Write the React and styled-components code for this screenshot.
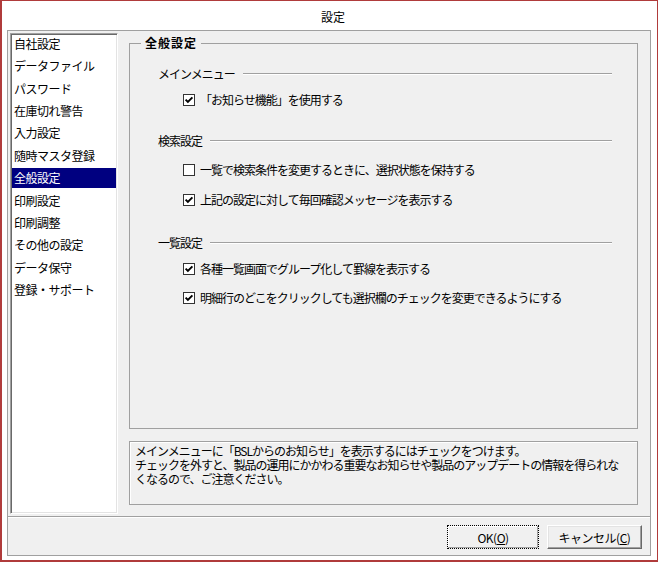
import React from 'react';
import styled, { createGlobalStyle } from 'styled-components';

const Global = createGlobalStyle`
  html, body { margin: 0; padding: 0; background: #fff; }
  body { font-family: "Noto Sans CJK JP", "Noto Sans", sans-serif; color: #000; }
  * { box-sizing: border-box; }
`;

const Window = styled.div`
  width: 658px;
  height: 562px;
  background: #fff;
  border: 1px solid #b03b3b;
  border-left-width: 2px;
  border-bottom-width: 2px;
  padding: 0 6px 4px 5px;
  display: flex;
  flex-direction: column;
`;

const TitleBar = styled.div`
  height: 29px;
  flex: none;
  display: flex;
  align-items: center;
  justify-content: center;
  padding: 2px 0 0 8px;
  font-size: 12px;
  line-height: 14px;
  color: #000;
`;

const Frame = styled.div`
  flex: 1;
  border: 1px solid #a0a0a0;
  background: #f0f0f0;
  display: flex;
  flex-direction: column;
`;

const TopPane = styled.div`
  height: 486px;
  flex: none;
  display: flex;
  padding: 2px 12px 0 2px;
  border-bottom: 1px solid #a0a0a0;
  box-shadow: 0 1px 0 #fff;
`;

const List = styled.ul`
  list-style: none;
  margin: 0 0 2px 0;
  padding: 0 1px;
  width: 108px;
  flex: none;
  background: #fff;
  border-top: 1px solid #a0a0a0;
  border-left: 1px solid #a0a0a0;
  border-right: 1px solid #fff;
  border-bottom: 1px solid #fff;
  box-shadow: inset 1px 1px 0 #696969, inset -1px -1px 0 #e3e3e3;
`;

const Item = styled.li`
  height: 20px;
  line-height: 20px;
  margin-bottom: 2.36px;
  padding-left: 2px;
  font-size: 12px;
  letter-spacing: -0.5px;
  white-space: nowrap;
  color: ${p => (p.$selected ? '#fff' : '#000')};
  background: ${p => (p.$selected ? '#000080' : 'transparent')};
`;

const RightCol = styled.div`
  flex: 1;
  margin-left: 11px;
  display: flex;
  flex-direction: column;
  min-width: 0;
`;

const GroupBox = styled.fieldset`
  flex: 1;
  margin: 2px 0 0 0;
  padding: 0;
  min-width: 0;
  border: 1px solid #a0a0a0;
`;

const Legend = styled.legend`
  margin-left: 11px;
  padding: 0 4px;
  font-size: 12px;
  font-weight: bold;
  letter-spacing: 1px;
  line-height: 16px;
`;

const SectionRow = styled.div`
  display: flex;
  align-items: center;
  height: 16px;
  margin-top: ${p => p.$mt}px;
  padding: 0 25px 0 28px;
`;

const SectionLabel = styled.span`
  font-size: 12px;
  letter-spacing: -1px;
  line-height: 16px;
  white-space: nowrap;
`;

const Rule = styled.span`
  flex: 1;
  height: 2px;
  margin: -1px 0 0 8px;
  border-top: 1px solid #a0a0a0;
  border-bottom: 1px solid #fff;
`;

const CheckRow = styled.label`
  display: flex;
  align-items: center;
  height: 16px;
  margin-top: ${p => p.$mt}px;
  padding-left: 53px;
  font-size: 12px;
  letter-spacing: -1px;
  line-height: 16px;
  white-space: nowrap;
`;

const Box = styled.span`
  width: 12px;
  height: 12px;
  flex: none;
  margin-right: 5px;
  border: 1px solid #333;
  background: #fff;
  display: flex;
  align-items: center;
  justify-content: center;
`;

const Desc = styled.div`
  flex: none;
  height: 64px;
  margin: 12px 0 11px 0;
  padding: 2px 5px;
  border: 1px solid #a0a0a0;
  box-shadow: inset 1px 1px 0 #fff;
  font-size: 12px;
  letter-spacing: -1px;
  line-height: 14px;
  white-space: nowrap;
`;

const BottomBar = styled.div`
  flex: 1;
  display: flex;
  justify-content: flex-end;
  align-items: flex-start;
  gap: 8px;
  padding: 8px 8px 0 0;
`;

const Button = styled.button`
  width: ${p => p.$w}px;
  height: 24px;
  padding: 0;
  font-family: inherit;
  font-size: 12px;
  letter-spacing: -0.5px;
  color: #000;
  background: #f0f0f0;
  border: 1px solid;
  border-color: ${p => (p.$default ? '#000' : '#fff #696969 #696969 #fff')};
  border-style: ${p => (p.$default ? 'dotted' : 'solid')};
  box-shadow: ${p =>
    p.$default
      ? 'inset -1px -1px 0 #a0a0a0, inset 1px 1px 0 #fff'
      : 'inset -1px -1px 0 #a0a0a0, inset 1px 1px 0 #e3e3e3'};
  u { text-decoration-thickness: 1px; text-underline-offset: 1px; }
`;

const Check = ({ checked }) => (
  <Box>
    {checked && (
      <svg width="10" height="10" viewBox="0 0 10 10">
        <polyline points="1.6,4.6 3.9,7 8.4,2.3" fill="none" stroke="#000" strokeWidth="1.9" />
      </svg>
    )}
  </Box>
);

const items = [
  '自社設定', 'データファイル', 'パスワード', '在庫切れ警告', '入力設定', '随時マスタ登録',
  '全般設定', '印刷設定', '印刷調整', 'その他の設定', 'データ保守', '登録・サポート',
];

export default function App() {
  return (
    <>
      <Global />
      <Window>
        <TitleBar>設定</TitleBar>
        <Frame>
          <TopPane>
            <List>
              {items.map(t => (
                <Item key={t} $selected={t === '全般設定'}>{t}</Item>
              ))}
            </List>
            <RightCol>
              <GroupBox>
                <Legend>全般設定</Legend>
                <SectionRow $mt={15}>
                  <SectionLabel>メインメニュー</SectionLabel>
                  <Rule />
                </SectionRow>
                <CheckRow $mt={10}>
                  <Check checked />「お知らせ機能」を使用する
                </CheckRow>
                <SectionRow $mt={25}>
                  <SectionLabel>検索設定</SectionLabel>
                  <Rule />
                </SectionRow>
                <CheckRow $mt={13}>
                  <Check />一覧で検索条件を変更するときに、選択状態を保持する
                </CheckRow>
                <CheckRow $mt={14}>
                  <Check checked />上記の設定に対して毎回確認メッセージを表示する
                </CheckRow>
                <SectionRow $mt={27}>
                  <SectionLabel>一覧設定</SectionLabel>
                  <Rule />
                </SectionRow>
                <CheckRow $mt={10}>
                  <Check checked />各種一覧画面でグループ化して罫線を表示する
                </CheckRow>
                <CheckRow $mt={13}>
                  <Check checked />明細行のどこをクリックしても選択欄のチェックを変更できるようにする
                </CheckRow>
              </GroupBox>
              <Desc>
                メインメニューに「BSLからのお知らせ」を表示するにはチェックをつけます。<br />
                チェックを外すと、製品の運用にかかわる重要なお知らせや製品のアップデートの情報を得られな<br />
                くなるので、ご注意ください。
              </Desc>
            </RightCol>
          </TopPane>
          <BottomBar>
            <Button $w={92} $default>OK(<u>O</u>)</Button>
            <Button $w={95}>キャンセル(<u>C</u>)</Button>
          </BottomBar>
        </Frame>
      </Window>
    </>
  );
}
